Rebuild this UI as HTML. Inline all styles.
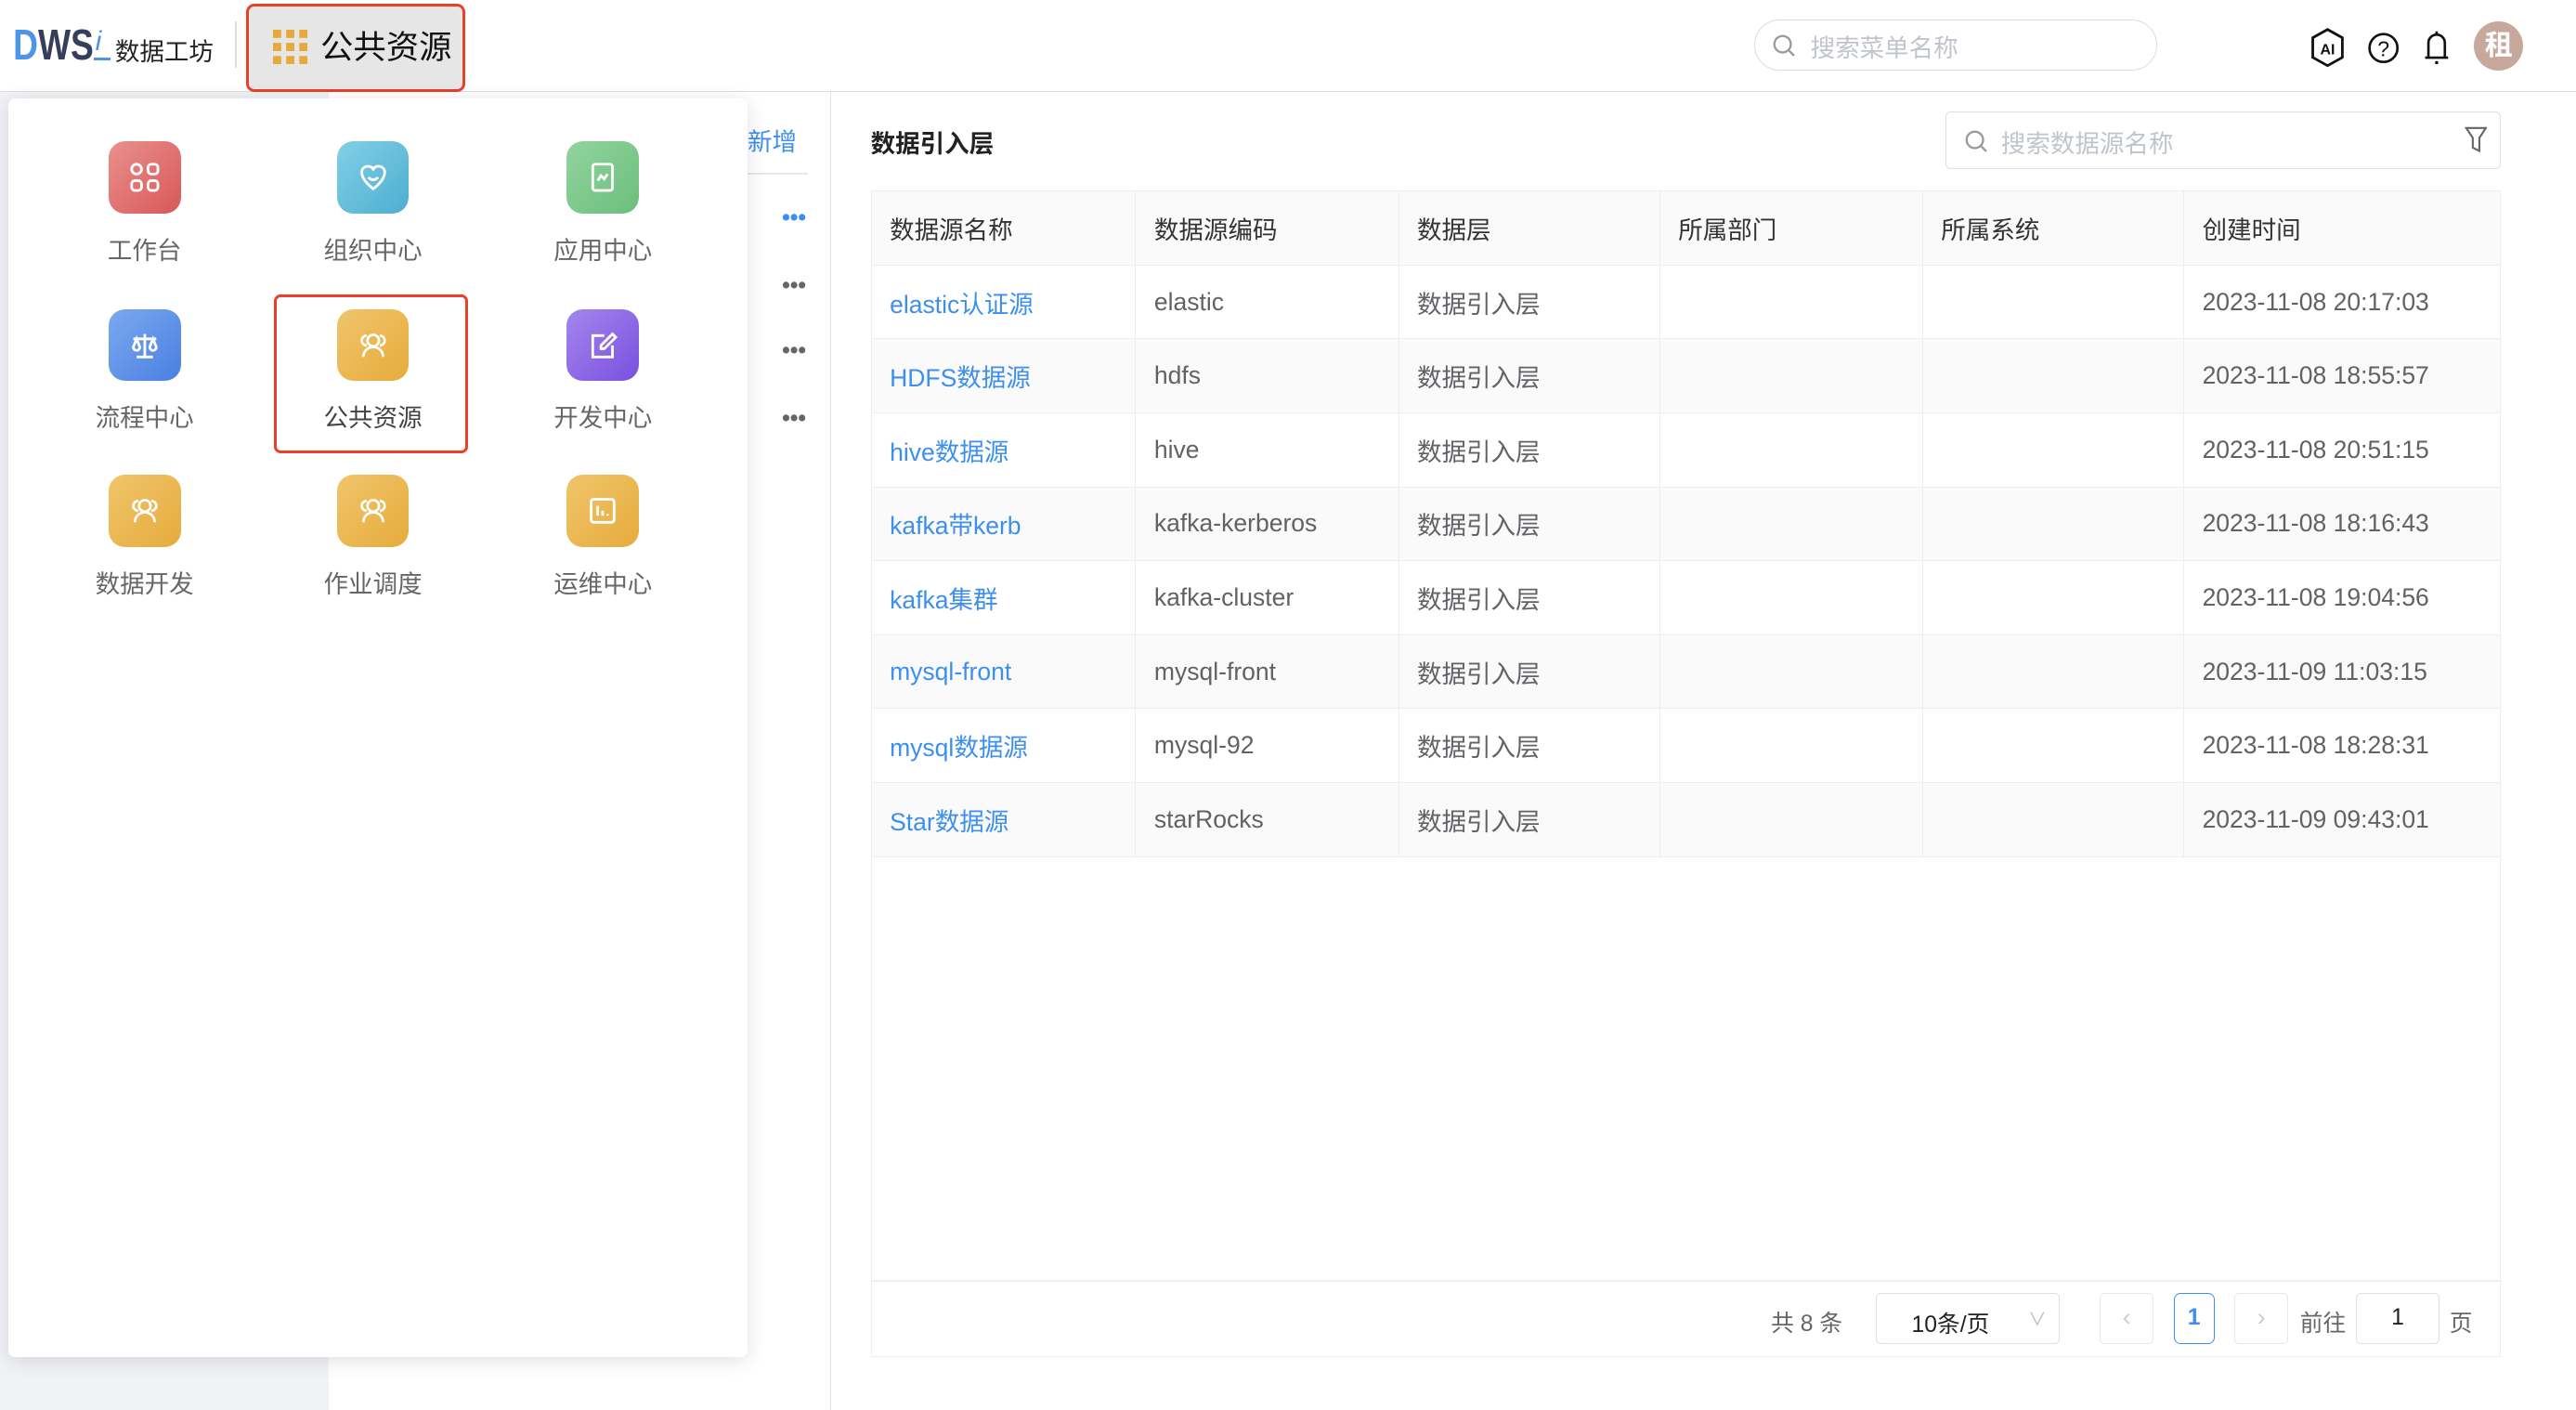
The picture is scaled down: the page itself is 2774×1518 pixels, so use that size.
<!DOCTYPE html>
<html><head><meta charset="utf-8"><style>
*{box-sizing:border-box;margin:0;padding:0}
html,body{width:2774px;height:1518px;overflow:hidden;background:#fff}
#w{width:1568px;height:858px;zoom:1.76913;position:relative;font-family:"Liberation Sans","Noto Sans CJK SC",sans-serif;color:#606266;font-size:15px}
.a{position:absolute}
.hdr{left:0;top:0;width:1568px;height:56px;background:#fff;border-bottom:1px solid #dedede}
.side{left:0;top:56px;width:200px;height:802px;background:#f0f2f5}
.mid{left:200px;top:56px;width:306px;height:802px;background:#fff;border-right:1px solid #e4e4e4}
.tile{width:44px;height:44px;border-radius:10px;display:flex;align-items:center;justify-content:center}
.lbl{width:120px;text-align:center;font-size:15px;color:#666}
table{border-collapse:collapse;position:absolute;left:530px;top:116px;width:992px;font-size:15px}
td,th{border:1px solid #ebeef5;height:45px;padding-left:11px;text-align:left;font-weight:normal}
th{background:#fafafa;color:#333}
tr:nth-child(odd) td{background:#fafafa}
td.l{color:#3d8fef}
</style></head><body><div id="w">
<div class="a hdr"></div>
<div class="a" style="left:8px;top:14px;font-size:21px;font-weight:bold;letter-spacing:0px;font-family:'Liberation Sans',sans-serif;transform:scaleY(1.25);transform-origin:left top;line-height:1"><span style="color:#4d94ea">D</span><span style="color:#353f5c">WS</span></div>
<div class="a" style="left:58px;top:17px;font-size:17px;color:#4d94ea;font-style:italic;line-height:1">i</div>
<div class="a" style="left:57px;top:35px;width:10px;height:2px;background:#4d94ea"></div>
<div class="a" style="left:70px;top:19px;font-size:15px;color:#222">数据工坊</div>
<div class="a" style="left:143px;top:13px;width:1px;height:28px;background:#ddd"></div>
<div class="a" style="left:150px;top:2px;width:133px;height:54px;border:2px solid #e8402a;border-radius:5px;background:#e6e6e6"></div>
<svg class="a" style="left:166px;top:18px" width="21" height="21"><g fill="#e8a93b"><rect x="0" y="0" width="5" height="5"/><rect x="8" y="0" width="5" height="5"/><rect x="16" y="0" width="5" height="5"/><rect x="0" y="8" width="5" height="5"/><rect x="8" y="8" width="5" height="5"/><rect x="16" y="8" width="5" height="5"/><rect x="0" y="16" width="5" height="5"/><rect x="8" y="16" width="5" height="5"/><rect x="16" y="16" width="5" height="5"/></g></svg>
<div class="a" style="left:195px;top:13px;font-size:20px;color:#111">公共资源</div>
<div class="a" style="left:1068px;top:12px;width:245px;height:31px;border:1px solid #dcdcdc;border-radius:16px"></div>
<svg class="a" style="left:1079px;top:21px" width="14" height="14"><circle cx="6" cy="6" r="5" fill="none" stroke="#999" stroke-width="1.3"/><path d="M10 10l3 3" stroke="#999" stroke-width="1.3"/></svg>
<div class="a" style="left:1102px;top:17px;font-size:15px;color:#c0c4cc">搜索菜单名称</div>
<svg class="a" style="left:1406px;top:17px" width="22" height="24"><path d="M11 1L20 6V18L11 23L2 18V6Z" fill="none" stroke="#111" stroke-width="1.6"/><text x="11" y="16" font-size="9" font-family="Liberation Sans" font-weight="bold" text-anchor="middle" fill="#111">AI</text></svg>
<svg class="a" style="left:1441px;top:19px" width="20" height="20"><circle cx="10" cy="10" r="8.5" fill="none" stroke="#111" stroke-width="1.5"/><text x="10" y="15" font-size="13" font-family="Liberation Sans" text-anchor="middle" fill="#111">?</text></svg>
<svg class="a" style="left:1474px;top:18px" width="18" height="22"><path d="M4 17V8a5 5 0 0 1 10 0v9M2 17h14" fill="none" stroke="#111" stroke-width="1.5"/><circle cx="9" cy="20" r="1" fill="#111"/><path d="M9 1v2" stroke="#111" stroke-width="1.5"/></svg>
<div class="a" style="left:1506px;top:13px;width:30px;height:30px;border-radius:50%;background:#c7a89d;color:#fff;font-size:17px;font-weight:bold;text-align:center;line-height:30px">租</div>

<div class="a side"></div>
<div class="a mid"></div>
<div class="a" style="left:455px;top:74px;font-size:15px;color:#3d8fef">新增</div>
<div class="a" style="left:450px;top:105px;width:42px;height:1px;background:#e4e7ed"></div>
<div class="a" style="left:476px;top:125px;font-size:14px;color:#3d8fef;font-weight:bold">•••</div>
<div class="a" style="left:476px;top:166px;font-size:14px;color:#666;font-weight:bold">•••</div>
<div class="a" style="left:476px;top:206px;font-size:14px;color:#666;font-weight:bold">•••</div>
<div class="a" style="left:476px;top:247px;font-size:14px;color:#666;font-weight:bold">•••</div>

<div class="a" style="left:530px;top:75px;font-size:15px;color:#222;font-weight:bold">数据引入层</div>
<div class="a" style="left:1184px;top:68px;width:338px;height:35px;border:1px solid #dcdfe6;border-radius:3px"></div>
<svg class="a" style="left:1196px;top:79px" width="14" height="14"><circle cx="6" cy="6" r="5" fill="none" stroke="#999" stroke-width="1.3"/><path d="M10 10l3 3" stroke="#999" stroke-width="1.3"/></svg>
<div class="a" style="left:1218px;top:75px;font-size:15px;color:#c0c4cc">搜索数据源名称</div>
<svg class="a" style="left:1500px;top:77px" width="14" height="16"><path d="M1 1h12L9 7v8L5 13V7Z" fill="none" stroke="#666" stroke-width="1.2"/></svg>

<div class="a" style="left:530px;top:116px;width:992px;height:710px;border:1px solid #ebeef5"></div>
<table>
<tr><th style="width:161px">数据源名称</th><th style="width:160px">数据源编码</th><th style="width:159px">数据层</th><th style="width:160px">所属部门</th><th style="width:159px">所属系统</th><th>创建时间</th></tr>
<tr><td class="l">elastic认证源</td><td>elastic</td><td>数据引入层</td><td></td><td></td><td>2023-11-08 20:17:03</td></tr>
<tr><td class="l">HDFS数据源</td><td>hdfs</td><td>数据引入层</td><td></td><td></td><td>2023-11-08 18:55:57</td></tr>
<tr><td class="l">hive数据源</td><td>hive</td><td>数据引入层</td><td></td><td></td><td>2023-11-08 20:51:15</td></tr>
<tr><td class="l">kafka带kerb</td><td>kafka-kerberos</td><td>数据引入层</td><td></td><td></td><td>2023-11-08 18:16:43</td></tr>
<tr><td class="l">kafka集群</td><td>kafka-cluster</td><td>数据引入层</td><td></td><td></td><td>2023-11-08 19:04:56</td></tr>
<tr><td class="l">mysql-front</td><td>mysql-front</td><td>数据引入层</td><td></td><td></td><td>2023-11-09 11:03:15</td></tr>
<tr><td class="l">mysql数据源</td><td>mysql-92</td><td>数据引入层</td><td></td><td></td><td>2023-11-08 18:28:31</td></tr>
<tr><td class="l">Star数据源</td><td>starRocks</td><td>数据引入层</td><td></td><td></td><td>2023-11-09 09:43:01</td></tr>
</table>
<div class="a" style="left:530px;top:779px;width:992px;height:1px;background:#ebeef5"></div>
<div class="a" style="left:1078px;top:794px;font-size:14px;color:#666">共 8 条</div>
<div class="a" style="left:1142px;top:787px;width:112px;height:31px;border:1px solid #dcdfe6;border-radius:3px;font-size:14px;color:#222;padding:7px 0 0 21px">10条/页<span style="position:absolute;left:92px;top:6px;color:#bbb;font-size:11px">∨</span></div>
<div class="a" style="left:1278px;top:787px;width:33px;height:31px;border:1px solid #e4e7ed;border-radius:3px;color:#ccc;text-align:center;line-height:29px">‹</div>
<div class="a" style="left:1323px;top:787px;width:25px;height:31px;border:1px solid #3d8fef;border-radius:4px;color:#3d8fef;font-weight:bold;text-align:center;line-height:29px;font-size:14px">1</div>
<div class="a" style="left:1360px;top:787px;width:33px;height:31px;border:1px solid #e4e7ed;border-radius:3px;color:#ccc;text-align:center;line-height:29px">›</div>
<div class="a" style="left:1400px;top:794px;font-size:14px;color:#666">前往</div>
<div class="a" style="left:1434px;top:787px;width:51px;height:31px;border:1px solid #dcdfe6;border-radius:3px;text-align:center;line-height:29px;color:#222;font-size:14px">1</div>
<div class="a" style="left:1491px;top:794px;font-size:14px;color:#666">页</div>

<div class="a" style="left:5px;top:60px;width:450px;height:766px;background:#fff;border-radius:4px;box-shadow:0 2px 12px rgba(0,0,0,.12)"></div>
<div class="a" style="left:167px;top:179px;width:118px;height:97px;border:2px solid #e8402a;border-radius:4px"></div>

<div class="a tile" style="left:66px;top:86px;background:linear-gradient(135deg,#ea908c,#d85858)"><svg width="18" height="18" fill="none" stroke="#fff" stroke-width="1.6"><rect x="1" y="1" width="6" height="6" rx="3"/><rect x="11" y="1" width="6" height="6" rx="2"/><rect x="1" y="11" width="6" height="6" rx="2"/><rect x="11" y="11" width="6" height="6" rx="2"/></svg></div>
<div class="a lbl" style="left:28px;top:140px">工作台</div>
<div class="a tile" style="left:205px;top:86px;background:linear-gradient(135deg,#82d0e6,#4daed1)"><svg width="18" height="18" fill="none" stroke="#fff" stroke-width="1.6"><path d="M9 4C7 1 2 2 2 6c0 5 7 10 7 10s7-5 7-10c0-4-5-5-7-2Z"/><path d="M6 9q3 3 6 0"/></svg></div>
<div class="a lbl" style="left:167px;top:140px">组织中心</div>
<div class="a tile" style="left:345px;top:86px;background:linear-gradient(135deg,#92d49f,#6bbf7b)"><svg width="18" height="18" fill="none" stroke="#fff" stroke-width="1.6"><rect x="3" y="1" width="12" height="16" rx="1.5"/><path d="M6 11l2-3 2 2 2-3"/></svg></div>
<div class="a lbl" style="left:307px;top:140px">应用中心</div>

<div class="a tile" style="left:66px;top:188px;background:linear-gradient(135deg,#7ba9ef,#4a7fe3)"><svg width="18" height="18" fill="none" stroke="#fff" stroke-width="1.6"><path d="M9 2v14M4 16h10M2 5h14M4 5l-2 5a2 2 0 0 0 4 0ZM14 5l-2 5a2 2 0 0 0 4 0Z"/></svg></div>
<div class="a lbl" style="left:28px;top:242px">流程中心</div>
<div class="a tile" style="left:205px;top:188px;background:linear-gradient(135deg,#f0c56b,#e6ab3c)"><svg width="18" height="18" fill="none" stroke="#fff" stroke-width="1.5"><circle cx="9" cy="6" r="3.5"/><path d="M3 16c0-4 3-6 6-6s6 2 6 6M5 3a3 3 0 0 0 0 6M13 3a3 3 0 0 1 0 6"/></svg></div>
<div class="a lbl" style="left:167px;top:242px;color:#444">公共资源</div>
<div class="a tile" style="left:345px;top:188px;background:linear-gradient(135deg,#a486ec,#7a50df)"><svg width="18" height="18" fill="none" stroke="#fff" stroke-width="1.6"><path d="M10 3H3v13h12V9"/><path d="M15 2l2 2-7 7H8V9Z"/></svg></div>
<div class="a lbl" style="left:307px;top:242px">开发中心</div>

<div class="a tile" style="left:66px;top:289px;background:linear-gradient(135deg,#f0c56b,#e6ab3c)"><svg width="18" height="18" fill="none" stroke="#fff" stroke-width="1.5"><circle cx="9" cy="6" r="3.5"/><path d="M3 16c0-4 3-6 6-6s6 2 6 6M5 3a3 3 0 0 0 0 6M13 3a3 3 0 0 1 0 6"/></svg></div>
<div class="a lbl" style="left:28px;top:343px">数据开发</div>
<div class="a tile" style="left:205px;top:289px;background:linear-gradient(135deg,#f0c56b,#e6ab3c)"><svg width="18" height="18" fill="none" stroke="#fff" stroke-width="1.5"><circle cx="9" cy="6" r="3.5"/><path d="M3 16c0-4 3-6 6-6s6 2 6 6M5 3a3 3 0 0 0 0 6M13 3a3 3 0 0 1 0 6"/></svg></div>
<div class="a lbl" style="left:167px;top:343px">作业调度</div>
<div class="a tile" style="left:345px;top:289px;background:linear-gradient(135deg,#f0c56b,#e6ab3c)"><svg width="18" height="18" fill="none" stroke="#fff" stroke-width="1.6"><rect x="2" y="2" width="14" height="14" rx="1.5"/><path d="M6 6v6M9 9v3M12 11v1"/></svg></div>
<div class="a lbl" style="left:307px;top:343px">运维中心</div>
</div></body></html>
